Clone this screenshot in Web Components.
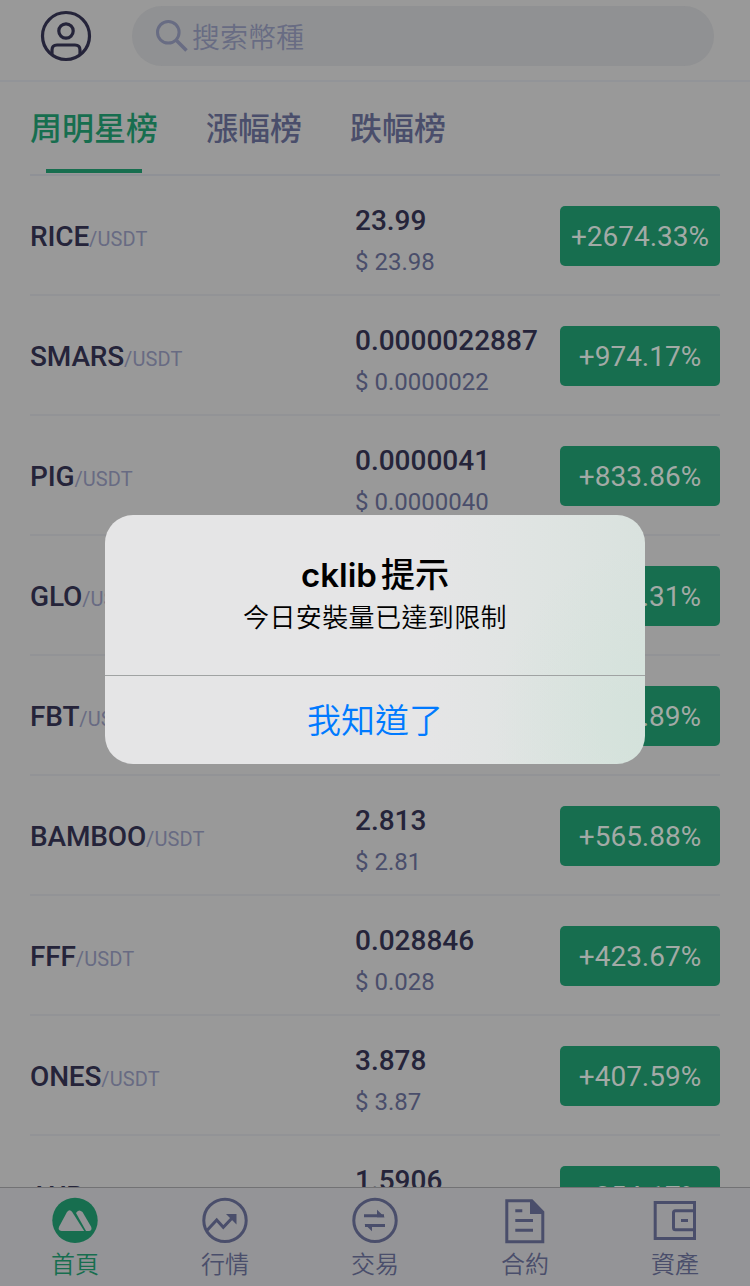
<!DOCTYPE html>
<html lang="zh-Hant">
<head>
<meta charset="utf-8">
<title>Market</title>
<style>
  body {
    margin: 0;
    background: #999999;
    font-family: Roboto, "Noto Sans CJK TC", sans-serif;
    --ink: #25243a;
    --muted: #4a4e6b;
    --faint: #686b83;
    --green: #176e4f;
    --line: #8f9196;
  }
</style>
</head>
<body>
<market-app></market-app>

<script>
/**
 * Search header with the account button
 */
class SearchHeader extends HTMLElement {
  constructor() {
    super();
    this.attachShadow({ mode: "open" });
    this.shadowRoot.innerHTML = `
      <style>
        :host {
          display: flex;
          box-sizing: border-box;
          height: 82px;
          padding: 6px 36px 0 40px;
          border-bottom: 2px solid #929498;
        }

        .user {
          width: 52px;
          height: 52px;
          margin: 4px 40px 0 0;
          color: var(--ink);
        }

        .search {
          flex: 1;
          display: flex;
          align-items: center;
          height: 60px;
          box-sizing: border-box;
          padding-left: 22px;
          border-radius: 30px;
          background: #909193;
          color: #686c83;
          font-size: 28px;
          font-weight: 350;
        }

        .search svg {
          width: 36px;
          height: 36px;
          margin-right: 2px;
        }
      </style>
      <svg class="user" viewBox="0 0 52 52" fill="none" stroke="currentColor" stroke-width="3.2">
        <circle cx="26" cy="26" r="23.5"/>
        <circle cx="26" cy="21" r="7.2"/>
        <path d="M12 45v-5q0-5 5-5h18q5 0 5 5v5"/>
      </svg>
      <div class="search">
        <svg viewBox="0 0 36 36" fill="none" stroke="currentColor" stroke-width="3">
          <circle cx="14.3" cy="14.3" r="10.8"/>
          <path d="M22 22l10.5 10.5" stroke-width="3.6"/>
        </svg>
        <slot></slot>
      </div>
    `;
  }
}
customElements.define("search-header", SearchHeader);

/**
 * One tab of the ranking lists, underlined when it has [active]
 */
class RankTab extends HTMLElement {
  constructor() {
    super();
    this.attachShadow({ mode: "open" });
    this.shadowRoot.innerHTML = `
      <style>
        :host {
          display: flex;
          flex-direction: column;
          align-items: center;
          height: 92px;
          color: var(--muted);
          font-size: 32px;
          font-weight: 500;
          line-height: 94px;
        }

        :host([active]) {
          color: var(--green);
        }

        span {
          height: 87px;
        }

        i {
          display: none;
          width: 96px;
          height: 4px;
          background: currentColor;
        }

        :host([active]) i {
          display: block;
        }
      </style>
      <span><slot></slot></span><i></i>
    `;
  }
}
customElements.define("rank-tab", RankTab);

/**
 * Row with pair name, price, price in dollars and change
 */
class CoinRow extends HTMLElement {
  constructor() {
    super();
    this.attachShadow({ mode: "open" });
    this.shadowRoot.innerHTML = `
      <style>
        :host {
          display: grid;
          grid-template-columns: 325px 205px 160px;
          align-items: center;
          box-sizing: border-box;
          height: 120px;
          border-bottom: 2px solid #929396;
          color: var(--ink);
          font-size: 28px;
          white-space: nowrap;
        }

        .name,
        .price {
          font-weight: 500;
        }

        .name {
          padding-top: 2px;
          letter-spacing: -0.15px;
        }

        small {
          color: var(--faint);
          font-size: 20px;
          font-weight: 400;
          letter-spacing: 0.1px;
        }

        .quote {
          padding-top: 6px;
        }

        .price {
          height: 48px;
          line-height: 48px;
        }

        .usd {
          height: 34px;
          line-height: 34px;
          color: var(--muted);
          font-size: 24px;
        }

        .change {
          height: 60px;
          margin-top: 2px;
          box-sizing: border-box;
          padding: 0 19px;
          display: flex;
          align-items: center;
          justify-content: center;
          border-radius: 5px;
          background: var(--green);
          color: #a2aaa6;
        }

        :host([clipped]) .change {
          justify-content: flex-end;
        }
      </style>
      <div class="name"><slot></slot><small>/USDT</small></div>
      <div class="quote">
        <div class="price"></div>
        <div class="usd"></div>
      </div>
      <div class="change"></div>
    `;
  }

  connectedCallback() {
    for (const key of ["price", "usd", "change"]) {
      this.shadowRoot.querySelector("." + key).textContent = this.getAttribute(key) || "";
    }
  }
}
customElements.define("coin-row", CoinRow);

const ICONS = {
  home: `
    <circle cx="24" cy="24.4" r="22.7" fill="currentColor" stroke="none"/>
    <path d="M16 16q2.6-3.4 5.200 0L33.200 35H10.500q-4.200-.6-2.300-4.500z" fill="#949497" stroke="none"/>
    <path d="M25 17q2.600-4.500 6.500-1l8.600 14.800q1.400 3.400-1.800 4.200H35z" fill="#949497" stroke="none"/>`,
  chart: `
    <circle cx="24" cy="24.4" r="21.200"/>
    <path d="M5.700 34.700L15.700 24l6.600 7.300 10-10.500"/>
    <path d="M25 18h10.500v10.500z" fill="currentColor" stroke="none"/>`,
  swap: `
    <circle cx="24" cy="24.4" r="21.200"/>
    <path d="M13 19.700h20M34 29.500H14"/>
    <path d="M26 13.800l7.800 7.400H26zM21 35.200L13.500 28H21z" fill="currentColor" stroke="none"/>`,
  contract: `
    <path d="M5.800 4.800h25L41.800 16v29.800h-36z"/>
    <path d="M29 4l14 14H29z" fill="currentColor" stroke="none"/>
    <path d="M14.300 14.700h7M14.300 24.400H32M14.300 34.200H32"/>`,
  wallet: `
    <path d="M4.200 6.500h39.300v36H4.200z"/>
    <path d="M44 14.800H24.500q-2 0-2 2v15q0 2 2 2H44M30 24.400h7"/>`,
};

/**
 * Item of the bottom bar, icon above its label
 */
class NavItem extends HTMLElement {
  constructor() {
    super();
    this.attachShadow({ mode: "open" });
    this.shadowRoot.innerHTML = `
      <style>
        :host {
          flex: 1;
          display: flex;
          flex-direction: column;
          align-items: center;
          gap: 3px;
          padding-top: 8px;
          color: var(--muted);
          font-size: 24px;
          font-weight: 350;
          line-height: 36px;
        }

        :host([active]) {
          color: var(--green);
        }

        svg {
          width: 48px;
          height: 48px;
        }
      </style>
      <svg viewBox="0 0 48 48" fill="none" stroke="currentColor" stroke-width="3">${ICONS[this.getAttribute("icon")]}</svg>
      <span><slot></slot></span>
    `;
  }
}

/**
 * Alert box over a page; title in its own slot
 */
class AlertDialog extends HTMLElement {
  constructor() {
    super();
    this.attachShadow({ mode: "open" });
    this.shadowRoot.innerHTML = `
      <style>
        :host {
          position: absolute;
          left: 105px;
          top: 515px;
          width: 540px;
          height: 249px;
          display: flex;
          flex-direction: column;
          border-radius: 28px;
          overflow: hidden;
          background:
            radial-gradient(ellipse 150px 180px at 100% 85%, rgba(208, 226, 217, 0.6), rgba(208, 226, 217, 0)),
            linear-gradient(90deg, #e5e5e6 60%, #dfe4e2 80%, #d9e2de 100%);
          color: #000;
          text-align: center;
        }

        .body {
          box-sizing: border-box;
          height: 161px;
          padding-top: 36px;
          border-bottom: 1px solid #a0a3a3;
        }

        .title {
          display: flex;
          justify-content: center;
          gap: 4px;
          font: 500 34px/48px Inter, "Noto Sans CJK TC", sans-serif;
        }

        .message {
          font-size: 26px;
          font-weight: 350;
          line-height: 38px;
          letter-spacing: 0.4px;
        }

        button {
          flex: 1;
          padding: 0 0 4px;
          border: 0;
          background: none;
          color: #007aff;
          font: inherit;
          font-size: 34px;
          font-weight: 350;
        }

        ::slotted([slot="app"]) {
          font-weight: 600;
          font-size: 33px;
        }
      </style>
      <div class="body">
        <div class="title"><slot name="app"></slot><slot name="title"></slot></div>
        <div class="message"><slot></slot></div>
      </div>
      <button><slot name="action"></slot></button>
    `;
  }
}
customElements.define("alert-dialog", AlertDialog);

class MarketApp extends HTMLElement {
  constructor() {
    super();
    this.attachShadow({ mode: "open" });
    this.shadowRoot.innerHTML = `
      <style>
        :host {
          position: relative;
          display: flex;
          flex-direction: column;
          height: 1286px;
          overflow: hidden;
        }

        .tabs {
          display: flex;
          gap: 48px;
          height: 92px;
          margin: 0 30px;
          border-bottom: 2px solid var(--line);
        }

        main {
          flex: 1;
          min-height: 0;
          overflow: hidden;
          padding: 0 30px;
        }

        nav {
          display: flex;
          box-sizing: border-box;
          height: 99px;
          border-top: 1px solid #727274;
          background: #949497;
        }
      </style>
      <search-header>搜索幣種</search-header>
      <div class="tabs">
        <rank-tab active>周明星榜</rank-tab>
        <rank-tab>漲幅榜</rank-tab>
        <rank-tab>跌幅榜</rank-tab>
      </div>
      <main>
        <coin-row price="23.99" usd="$ 23.98" change="+2674.33%">RICE</coin-row>
        <coin-row price="0.0000022887" usd="$ 0.0000022" change="+974.17%">SMARS</coin-row>
        <coin-row price="0.0000041" usd="$ 0.0000040" change="+833.86%">PIG</coin-row>
        <coin-row clipped change=".31%">GLO</coin-row>
        <coin-row clipped change=".89%">FBT</coin-row>
        <coin-row price="2.813" usd="$ 2.81" change="+565.88%">BAMBOO</coin-row>
        <coin-row price="0.028846" usd="$ 0.028" change="+423.67%">FFF</coin-row>
        <coin-row price="3.878" usd="$ 3.87" change="+407.59%">ONES</coin-row>
        <coin-row price="1.5906" change="+354.17%">AUB</coin-row>
      </main>
      <nav></nav>
      <alert-dialog>
        <span slot="app">cklib</span>
        <span slot="title">提示</span>
        今日安裝量已達到限制
        <span slot="action">我知道了</span>
      </alert-dialog>
    `;
    this.shadowRoot.querySelector("nav").innerHTML = `
      <nav-item icon="home" active>首頁</nav-item>
      <nav-item icon="chart">行情</nav-item>
      <nav-item icon="swap">交易</nav-item>
      <nav-item icon="contract">合約</nav-item>
      <nav-item icon="wallet">資產</nav-item>
    `;
  }
}
customElements.define("nav-item", NavItem);
customElements.define("market-app", MarketApp);
</script>
</body>
</html>
